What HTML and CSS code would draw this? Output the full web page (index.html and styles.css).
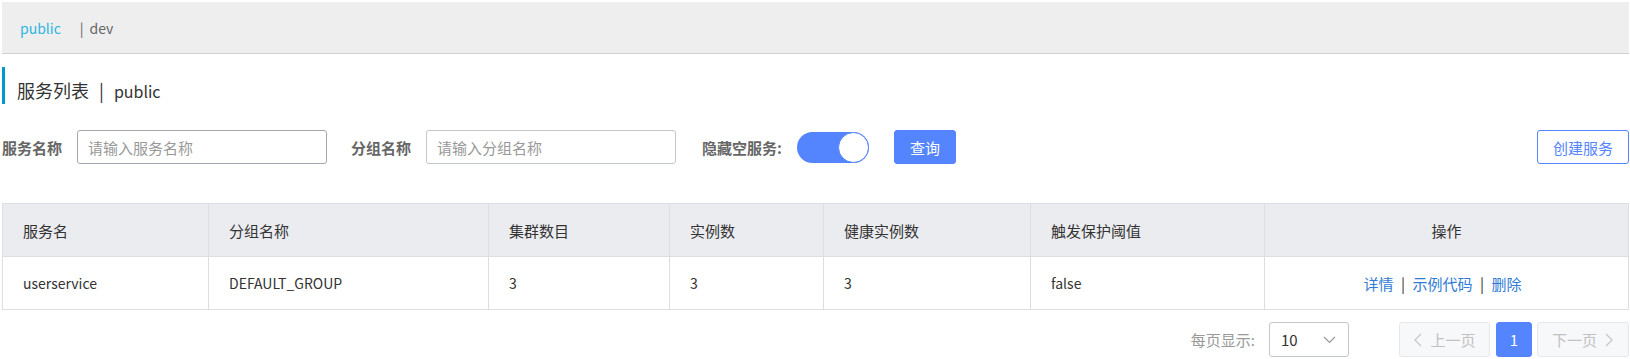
FILE: index.html
```html
<!DOCTYPE html>
<html lang="zh-CN">

<head>
    <meta charset="UTF-8">
    <meta name="viewport" content="width=device-width, initial-scale=1.0">
    <title>服务列表</title>
    <link rel="stylesheet" href="styles.css">
</head>

<body>
    <div id="page">
        <div class="ns-bar">
            <span class="ns active">public</span>
            <span class="ns">|<span class="ns-name">dev</span></span>
        </div>

        <h1 class="page-title">服务列表<span class="title-sep">|</span><span class="title-ns">public</span></h1>

        <div class="filter-row">
            <div class="form-item">
                <label>服务名称</label>
                <input type="text" class="text-input focused" placeholder="请输入服务名称">
            </div>
            <div class="form-item">
                <label>分组名称</label>
                <input type="text" class="text-input" placeholder="请输入分组名称">
            </div>
            <div class="form-item">
                <label>隐藏空服务:</label>
                <div class="switch"><span class="knob"></span></div>
            </div>
            <div class="form-item">
                <button class="btn primary">查询</button>
            </div>
            <div class="spacer"></div>
            <button class="btn outline">创建服务</button>
        </div>

        <table id="services">
            <colgroup>
                <col style="width:206px">
                <col style="width:280px">
                <col style="width:181px">
                <col style="width:154px">
                <col style="width:207px">
                <col style="width:234px">
                <col>
            </colgroup>
            <thead>
                <tr>
                    <th>服务名</th>
                    <th>分组名称</th>
                    <th>集群数目</th>
                    <th>实例数</th>
                    <th>健康实例数</th>
                    <th>触发保护阈值</th>
                    <th class="center">操作</th>
                </tr>
            </thead>
            <tbody>
                <tr>
                    <td>userservice</td>
                    <td>DEFAULT_GROUP</td>
                    <td>3</td>
                    <td>3</td>
                    <td>3</td>
                    <td>false</td>
                    <td class="center actions">
                        <a>详情</a><span class="sep">|</span><a>示例代码</a><span class="sep">|</span><a>删除</a>
                    </td>
                </tr>
            </tbody>
        </table>

        <div class="pager">
            <span class="page-size-label">每页显示:</span>
            <div class="select">
                <span>10</span>
                <svg width="13" height="8" viewBox="0 0 13 8"><path d="M1 1 L6.5 6.5 L12 1" fill="none" stroke="#999" stroke-width="1.2"/></svg>
            </div>
            <button class="page-btn disabled prev">
                <svg width="9" height="14" viewBox="0 0 9 14"><path d="M8 1 L2 7 L8 13" fill="none" stroke="#c8c8c8" stroke-width="1.3"/></svg>
                上一页
            </button>
            <button class="page-btn current">1</button>
            <button class="page-btn disabled next">
                下一页
                <svg width="9" height="14" viewBox="0 0 9 14"><path d="M1 1 L7 7 L1 13" fill="none" stroke="#c8c8c8" stroke-width="1.3"/></svg>
            </button>
        </div>
    </div>
</body>

</html>
```

FILE: styles.css
```css
body {
    margin: 0;
    background-color: #fff;
    font-family: "Noto Sans CJK SC", "Noto Sans", sans-serif;
    font-size: 15px;
    color: #333;
}

#page {
    padding: 2px 1px 0 2px;
}

.ns-bar {
    height: 51px;
    background-color: #eeeeee;
    border-bottom: 1px solid #d0d0d0;
    display: flex;
    align-items: center;
    padding-left: 18px;
}

.ns {
    color: #666;
    font-size: 14px;
}

.ns.active {
    color: #2db6e0;
    margin-right: 19px;
}

.ns-name {
    margin-left: 6px;
}

.page-title {
    margin: 13px 0 0 0;
    height: 28px;
    padding-top: 9px;
    line-height: 28px;
    border-left: 3px solid #0099cc;
    padding-left: 12px;
    font-size: 18px;
    font-weight: normal;
    color: #333;
}

.title-sep {
    margin: 0 10px 0 10px;
}

.title-ns {
    font-size: 16px;
}

.filter-row {
    display: flex;
    align-items: center;
    margin-top: 26px;
    height: 34px;
}

.form-item {
    display: flex;
    align-items: center;
    margin-right: 24px;
}

.form-item:nth-child(2) {
    margin-right: 26px;
}

.form-item label {
    font-weight: bold;
    color: #666;
    font-size: 15px;
    margin-right: 15px;
}

.text-input {
    box-sizing: border-box;
    width: 250px;
    height: 34px;
    border: 1px solid #c4c6cf;
    border-radius: 3px;
    padding: 0 10px;
    font-family: inherit;
    font-size: 15px;
    outline: none;
}

.text-input.focused {
    border-color: #a3a6b2;
}

.text-input::placeholder {
    color: #999;
}

.switch {
    position: relative;
    width: 72px;
    height: 31px;
    border-radius: 16px;
    background-color: #5584ff;
}

.knob {
    position: absolute;
    right: 0;
    top: 0;
    box-sizing: border-box;
    width: 31px;
    height: 31px;
    border-radius: 50%;
    background-color: #fff;
    border: 1px solid #5584ff;
}

.spacer {
    flex: 1;
}

.btn {
    box-sizing: border-box;
    height: 34px;
    border-radius: 3px;
    font-family: inherit;
    font-size: 15px;
    padding: 0;
    cursor: pointer;
}

.btn.primary {
    width: 62px;
    margin-left: 1px;
    background-color: #5584ff;
    border: 1px solid #5584ff;
    color: #fff;
}

.btn.outline {
    width: 92px;
    background-color: #fff;
    border: 1px solid #5584ff;
    color: #5584ff;
}

table {
    width: 100%;
    margin-top: 39px;
    border-collapse: collapse;
    table-layout: fixed;
    border: 1px solid #dcdee3;
}

th,
td {
    text-align: left;
    padding: 0 20px;
    border: 1px solid #dcdee3;
    color: #333;
}

th {
    height: 52px;
    font-size: 15px;
    font-weight: normal;
    background-color: #ebecf0;
}

td {
    height: 52px;
    font-size: 14px;
}

.center {
    text-align: center;
}

td.actions {
    font-size: 15px;
    padding-right: 28px;
}

td a {
    color: #2f7bd5;
}

.sep {
    color: #333;
    margin: 0 7.5px;
}

.pager {
    display: flex;
    justify-content: flex-end;
    align-items: center;
    margin-top: 12px;
    height: 35px;
}

.page-size-label {
    color: #999;
    margin-right: 14px;
}

.select {
    box-sizing: border-box;
    width: 80px;
    height: 35px;
    border: 1px solid #c4c6cf;
    border-radius: 3px;
    display: flex;
    align-items: center;
    justify-content: space-between;
    padding: 0 12px 0 11px;
    margin-right: 50px;
}

.page-btn {
    box-sizing: border-box;
    height: 35px;
    border-radius: 3px;
    font-family: inherit;
    font-size: 15px;
    display: flex;
    align-items: center;
    justify-content: center;
    gap: 8px;
    padding: 0;
}

.page-btn.disabled {
    background-color: #f7f8fa;
    border: 1px solid #e6e7eb;
    color: #c1c1c1;
}

.page-btn.prev {
    width: 91px;
    margin-right: 6px;
}

.page-btn.next {
    width: 92px;
    margin-left: 5px;
}

.page-btn.current {
    width: 36px;
    background-color: #5584ff;
    border: 1px solid #5584ff;
    color: #fff;
}
```
